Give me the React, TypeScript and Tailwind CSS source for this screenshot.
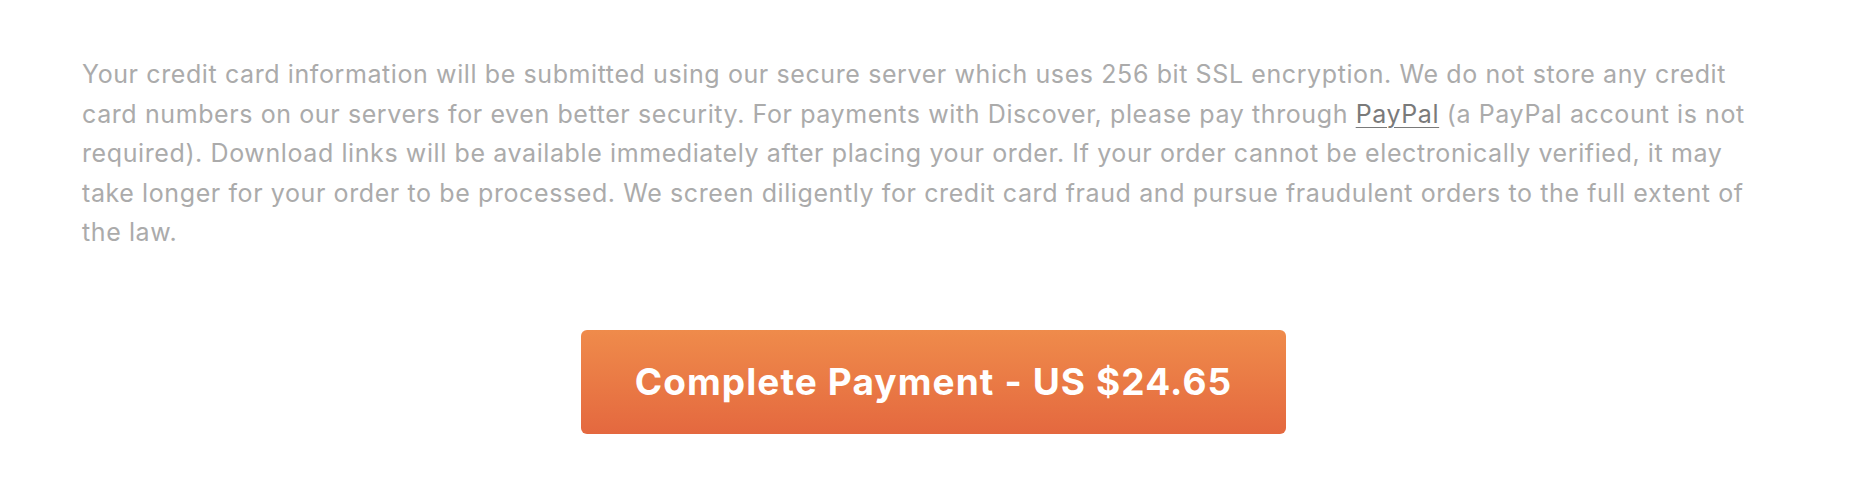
export default function App() {
  return (
    <div className="min-h-[499px] bg-white px-[82px] pt-[55px] font-['Inter',sans-serif]">
      <p className="text-[25px] leading-[39.5px] tracking-[0.6px] text-[#ababab]">
        Your credit card information will be submitted using our secure server which uses 256 bit SSL encryption. We do not
        store any credit card numbers on our servers for even better security. For payments with Discover, please pay
        through{' '}
        <a href="#" className="text-[#7a7a7a] underline decoration-1 underline-offset-4">
          PayPal
        </a>{' '}
        (a PayPal account is not required). Download links will be available immediately after placing your order. If your
        order cannot be electronically verified, it may take longer for your order to be processed. We screen diligently for
        credit card fraud and pursue fraudulent orders to the full extent of the law.
      </p>

      <div className="mt-[77px] flex justify-center pl-[17px]">
        <button
          type="submit"
          className="flex h-[104px] w-[705px] items-center justify-center rounded-[6px] bg-gradient-to-b from-[#ef8b4b] to-[#e4683f] text-[37px] font-bold tracking-[1.1px] text-white"
        >
          Complete Payment - US $24.65
        </button>
      </div>
    </div>
  );
}
